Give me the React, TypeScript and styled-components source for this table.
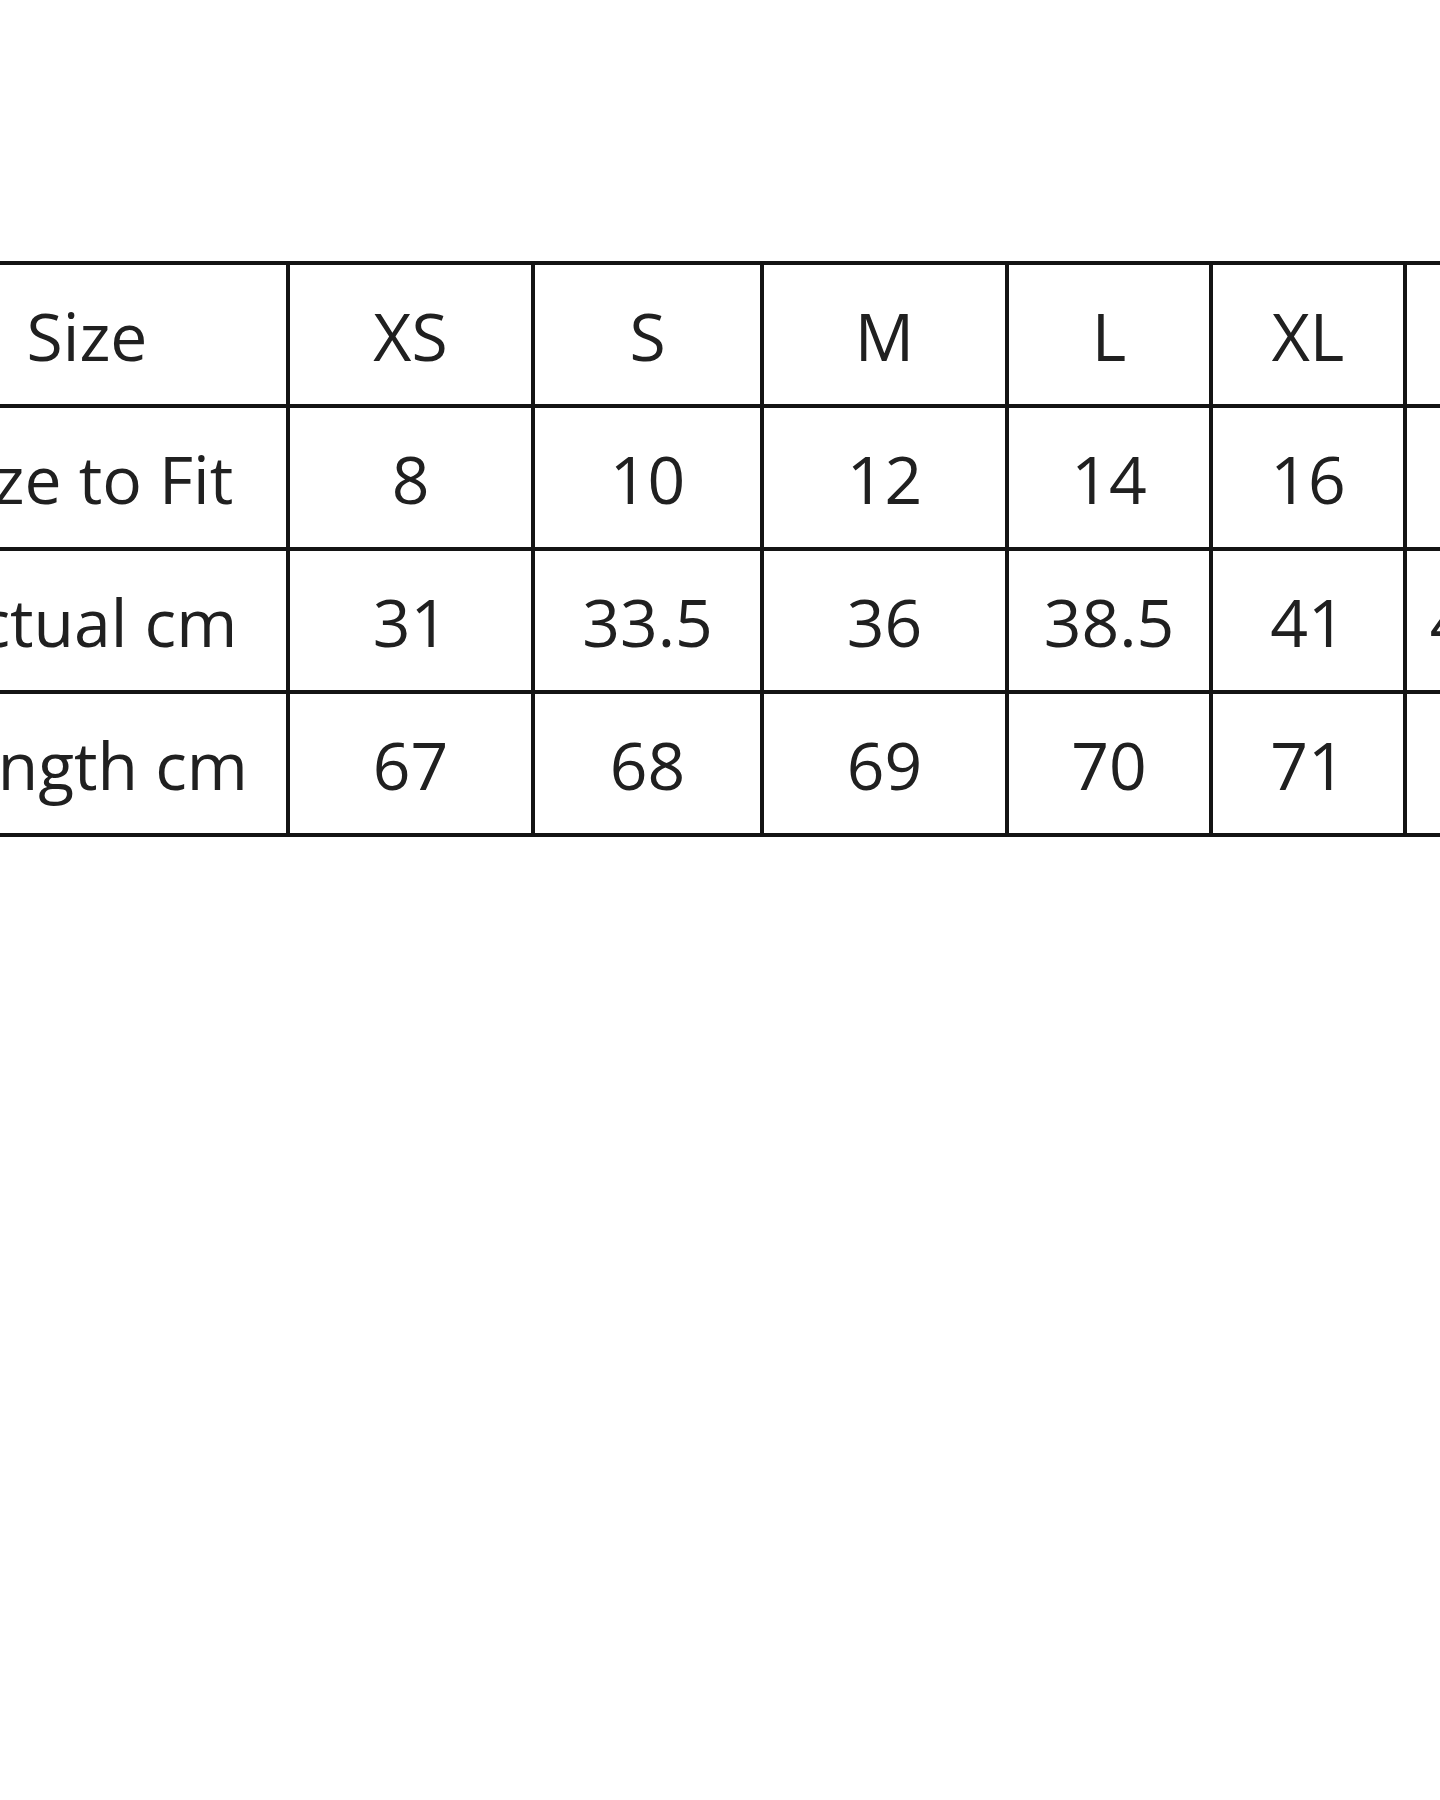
import React from "react";
import styled, { createGlobalStyle } from "styled-components";

const GlobalStyle = createGlobalStyle`
  html, body {
    margin: 0;
    padding: 0;
    background: #ffffff;
    overflow: hidden;
  }
  body {
    font-family: "Open Sans", "Noto Sans", sans-serif;
  }
`;

// widths measured border centre to border centre; the chart runs off both edges
const columns = [402, 245, 229, 245, 204, 194, 180];

const rows = [
  ["Size", "XS", "S", "M", "L", "XL", "XXL"],
  ["Size to Fit", "8", "10", "12", "14", "16", "18"],
  ["Actual cm", "31", "33.5", "36", "38.5", "41", "43.5"],
  ["Length cm", "67", "68", "69", "70", "71", "72"],
];

const Page = styled.div`
  width: 1440px;
  height: 1800px;
  overflow: hidden;
  background: #ffffff;
  padding-top: 261px;
  box-sizing: border-box;
`;

const Chart = styled.table`
  margin-left: -116px;
  border-collapse: collapse;
  table-layout: fixed;
  width: ${columns.reduce((a, b) => a + b, 0)}px;
`;

const Row = styled.tr`
  height: 143px;
`;

const Cell = styled.td`
  border: 4px solid #141414;
  padding: 0;
  text-align: center;
  vertical-align: middle;
  font-size: 66px;
  line-height: 1;
  color: #202020;
  white-space: nowrap;
  overflow: hidden;
`;

const SizeChart = () => {
  return (
    <Page>
      <GlobalStyle />
      <Chart>
        <colgroup>
          {columns.map((w, i) => (
            <col key={i} style={{ width: w }} />
          ))}
        </colgroup>
        <tbody>
          {rows.map((row, r) => (
            <Row key={r}>
              {row.map((text, c) => (
                <Cell key={c}>{text}</Cell>
              ))}
            </Row>
          ))}
        </tbody>
      </Chart>
    </Page>
  );
};

export default SizeChart;
